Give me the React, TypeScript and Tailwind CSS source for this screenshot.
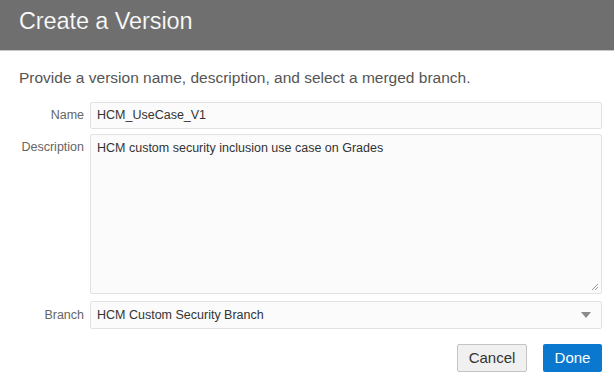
export default function App() {
  return (
    <div className="w-[614px] h-[379px] bg-white overflow-hidden font-['Liberation_Sans',Arial,sans-serif]">
      {/* Header */}
      <div className="h-[51px] bg-[#6f6f6f] border-b border-[#c8c8c8] pl-[19px] pt-[6px]">
        <h1 className="text-[23.5px] leading-[30px] text-white font-light tracking-[-0.1px] [-webkit-text-stroke:0.2px_#6f6f6f]">
          Create a Version
        </h1>
      </div>

      <div className="pl-[19px] pr-[12px]">
        <p className="mt-[17px] text-[15.5px] leading-[19px] text-[#555]">
          Provide a version name, description, and select a merged branch.
        </p>

        <div className="mt-[15px] flex flex-col gap-[5px]">
          <div className="flex items-center">
            <label className="w-[65px] text-right text-[12.5px] text-[#666]">Name</label>
            <div className="ml-[6px] flex-1 h-[27px] bg-[#fbfbfb] border border-[#e2e2e2] rounded-[2px] px-[6px] flex items-center text-[12.5px] text-[#333]">
              HCM_UseCase_V1
            </div>
          </div>

          <div className="flex items-start">
            <label className="w-[65px] text-right text-[12.5px] text-[#666] pt-[4px]">Description</label>
            <div className="relative ml-[6px] flex-1 h-[160px] bg-[#fbfbfb] border border-[#e2e2e2] rounded-[2px] px-[6px] pt-[4px] text-[12.5px] text-[#333]">
              HCM custom security inclusion use case on Grades
              <svg className="absolute right-[2px] bottom-[2px]" width="9" height="9" viewBox="0 0 9 9">
                <path d="M8 2 L2 8 M8 5 L5 8" stroke="#999" strokeWidth="1" />
              </svg>
            </div>
          </div>

          <div className="mt-[2px] flex items-center">
            <label className="w-[65px] text-right text-[12.5px] text-[#666]">Branch</label>
            <div className="ml-[6px] flex-1 h-[28px] bg-[#fbfbfb] border border-[#e2e2e2] rounded-[2px] pl-[6px] pr-[10px] flex items-center justify-between text-[12.5px] text-[#333]">
              <span>HCM Custom Security Branch</span>
              <svg width="10" height="6" viewBox="0 0 10 6">
                <path d="M0 0 H10 L5 6 Z" fill="#8a8a8a" />
              </svg>
            </div>
          </div>
        </div>

        <div className="mt-[15px] flex justify-end gap-[16px]">
          <button className="w-[70px] h-[28px] bg-[#f0f0f0] border border-[#c4c4c4] rounded-[2px] text-[15px] text-[#333]">
            Cancel
          </button>
          <button className="w-[59px] h-[28px] bg-[#0a78cf] rounded-[2px] text-[15px] text-white">
            Done
          </button>
        </div>
      </div>
    </div>
  )
}
